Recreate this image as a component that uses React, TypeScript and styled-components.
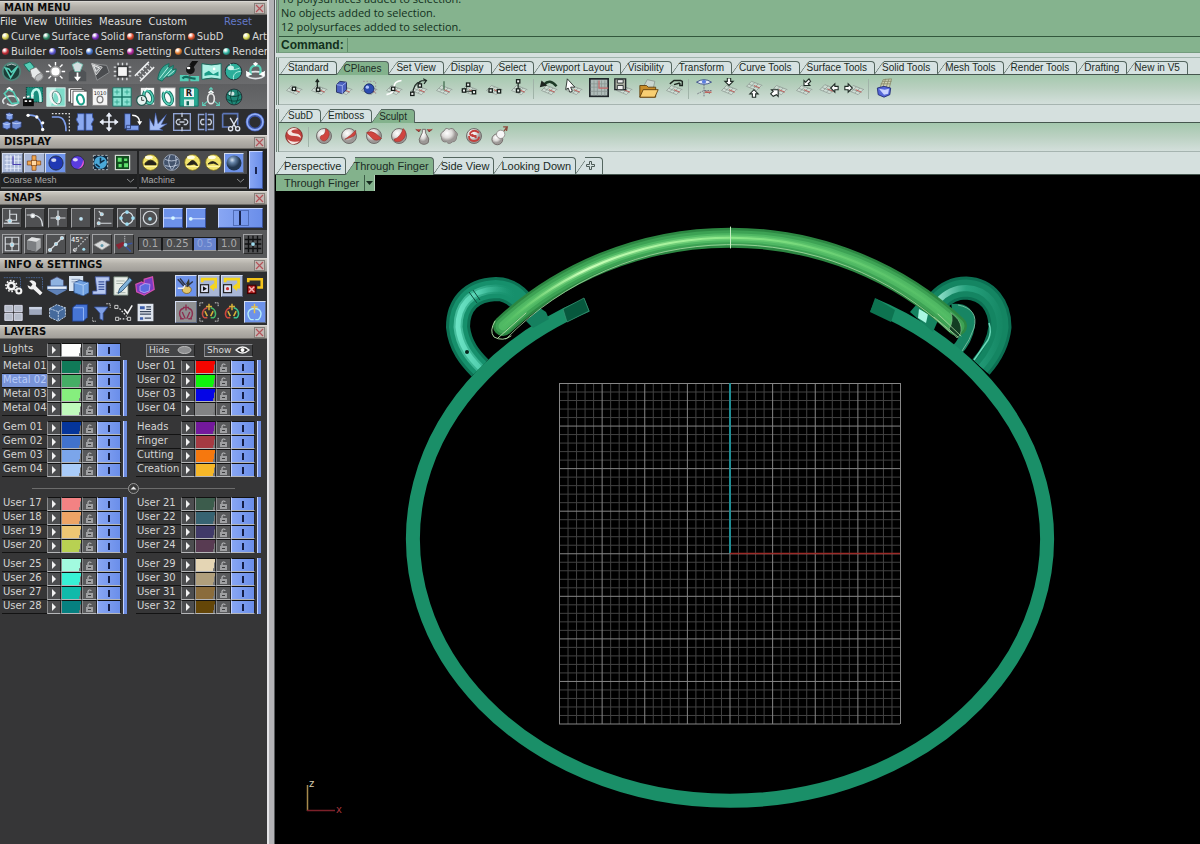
import React from "react";
import styled, { createGlobalStyle, css } from "styled-components";

const SANS = '"DejaVu Sans", Verdana, sans-serif';
const ARIAL = '"Liberation Sans", Arial, sans-serif';
const HUMANIST = '"Open Sans", "Noto Sans", sans-serif';

const GlobalStyle = createGlobalStyle`
  * { box-sizing: border-box; }
  body { margin: 0; background: #000; font-family: ${SANS}; font-size: 10px; }
  button, input, select { font: inherit; color: inherit; margin: 0; padding: 0; border: 0; background: none; border-radius: 0; }
  button, select { cursor: pointer; }
  svg { display: block; }
`;

/* ---------- shell ---------- */

const Shell = styled.div`
  display: grid;
  grid-template-columns: 267px 8px minmax(0, 1fr);
  height: 100vh;
  overflow: hidden;
`;
const Sidebar = styled.aside`
  display: flex;
  flex-direction: column;
  overflow: hidden;
  background: #363637;
  color: #e2e2e2;
  padding-top: 1px;
`;
const Divider = styled.div`
  border-left: 2px solid #e4e4e6;
  border-right: 1px solid #55585a;
  background: #b3b3b6;
`;
const Workspace = styled.main`
  display: flex;
  flex-direction: column;
  min-height: 0;
  background: #d5e0de;
`;

/* ---------- sidebar ---------- */

const Header = styled.header`
  display: flex;
  align-items: center;
  justify-content: space-between;
  height: 14px;
  padding: 0 2px 0 4px;
  background: linear-gradient(#cbc8c1, #b4b1aa 40%, #a19e99);
  border-top: 1px solid #d9d7d2;
  border-bottom: 1px solid #6c6a66;
  h2 { margin: 0; font-size: 10px; line-height: 12px; font-weight: 700; color: #0b0b0b; }
`;
const CloseButton = styled.button`
  width: 11px;
  height: 11px;
  border: 1px solid #85807b;
  background: #c3b9b5;
  svg { width: 9px; height: 9px; }
`;
const MenuRow = styled.nav`
  display: flex;
  align-items: center;
  gap: 7px;
  height: 14px;
  padding-right: 15px;
  background: #2a2b2c;
`;
const MenuButton = styled.button<{ $accent?: boolean }>`
  line-height: 14px;
  color: ${(p) => (p.$accent ? "#6379c8" : "#dedede")};
  margin-left: ${(p) => (p.$accent ? "auto" : "0")};
`;
const CategoryRow = styled.nav<{ $gap: number }>`
  display: flex;
  align-items: center;
  gap: ${(p) => p.$gap}px;
  height: 15px;
  padding-left: 2px;
  background: #2a2b2c;
  overflow: hidden;
  white-space: nowrap;
`;
const Category = styled.button<{ $dot: string; $push?: boolean }>`
  display: flex;
  align-items: center;
  gap: 2px;
  line-height: 14px;
  color: #d6d6d6;
  margin-left: ${(p) => (p.$push ? "auto" : "0")};
  &::before {
    content: "";
    width: 7px;
    height: 7px;
    border-radius: 50%;
    background: radial-gradient(circle at 35% 30%, #fff 0 10%, ${(p) => p.$dot} 50%, #222);
  }
`;
const IconGrid = styled.div<{ $cols: number; $dark?: boolean }>`
  display: grid;
  grid-template-columns: repeat(${(p) => p.$cols}, 1fr);
  align-items: center;
  justify-items: center;
  height: ${(p) => (p.$dark ? 26 : 25)}px;
  background: ${(p) => (p.$dark ? "#2d2e30" : "linear-gradient(#5e5f61, #6a6b6d)")};
`;
const IconButton = styled.button<{ $lit?: "blue" | "pale" | "grey"; $w?: number; $h?: number }>`
  display: flex;
  align-items: center;
  justify-content: center;
  flex: none;
  width: ${(p) => p.$w ?? 22}px;
  height: ${(p) => p.$h ?? 22}px;
  ${(p) => p.$lit && css`
    border: 1px solid;
    border-color: #d3dcf0 #5b6780 #5b6780 #d3dcf0;
    background: ${p.$lit === "blue" ? "#6d92ea" : p.$lit === "pale" ? "#a9b7d6" : "#8f9092"};
  `}
`;
const DisplayBody = styled.div`
  display: grid;
  grid-template-columns: 136px 108px 14px;
  gap: 2px;
  padding: 2px 3px 2px 1px;
  background: #232425;
  height: 42px;
`;
const DisplayGroup = styled.div`
  display: grid;
  grid-template-rows: 23px 14px;
  background: #4b4c4e;
`;
const DisplayIcons = styled.div`
  display: flex;
  align-items: center;
  justify-content: space-between;
  padding: 0 3px 0 1px;
`;
const SelectBox = styled.div`
  position: relative;
  background: #1f2021;
  border-bottom: 1px solid #6d6e70;
  select {
    appearance: none;
    display: block;
    width: 100%;
    height: 13px;
    padding-left: 2px;
    font-family: ${ARIAL};
    font-size: 9px;
    line-height: 13px;
    color: #a9a9a9;
  }
  svg { position: absolute; right: 3px; top: 4px; width: 7px; height: 5px; pointer-events: none; }
`;
const BlueToggle = styled.button<{ $box?: boolean }>`
  display: flex;
  align-items: center;
  justify-content: center;
  border: 1px solid;
  border-color: #c4d3ff #3c549b #3c549b #c4d3ff;
  background: linear-gradient(90deg, #88a6f3, #6a8eea);
  &::after {
    content: "";
    width: ${(p) => (p.$box ? 14 : 2)}px;
    height: ${(p) => (p.$box ? 14 : 7)}px;
    background: ${(p) => (p.$box ? "linear-gradient(90deg, transparent 5px, #1a2550 5px 7px, transparent 7px)" : "#1a2550")};
    border: ${(p) => (p.$box ? "1px solid #506cb8" : "0")};
  }
`;
const SnapRow = styled.div<{ $alt?: boolean }>`
  display: flex;
  align-items: center;
  gap: ${(p) => (p.$alt ? 2 : 3)}px;
  height: ${(p) => (p.$alt ? 28 : 25)}px;
  padding: 0 4px 0 2px;
  background: ${(p) => (p.$alt ? "#58595b" : "#2c2d2e")};
  ${BlueToggle} { width: 45px; height: 20px; margin-left: auto; }
`;
const SnapButton = styled.button<{ $on?: boolean; $apart?: boolean }>`
  display: flex;
  align-items: center;
  justify-content: center;
  flex: none;
  width: 20px;
  height: 20px;
  margin-left: ${(p) => (p.$apart ? 2 : 0)}px;
  border: 1px solid;
  border-color: ${(p) => (p.$on ? "#c4d3ff #38509a #38509a #c4d3ff" : "#a2a3a5 #2a2a2a #2a2a2a #a2a3a5")};
  background: ${(p) => (p.$on ? "#6d92ea" : "#505153")};
`;
const Values = styled.div`
  display: flex;
  flex: 1;
  margin-left: 2px;
`;
const Value = styled.button<{ $on?: boolean }>`
  flex: 1 1 auto;
  height: 14px;
  line-height: 12px;
  border: 1px solid #18191a;
  border-bottom-color: #9c9d9f;
  background: ${(p) => (p.$on ? "#6783cd" : "#4b4c4e")};
  color: ${(p) => (p.$on ? "#93a8de" : "#aaaaac")};
`;
const InfoRow = styled.div<{ $h: number }>`
  display: grid;
  grid-template-columns: repeat(7, 22px) 1fr repeat(4, 23px);
  align-items: center;
  justify-items: center;
  height: ${(p) => p.$h}px;
  padding: 0 1px 0 2px;
  background: #2d2e30;
`;
const Layers = styled.div`
  display: flex;
  flex-direction: column;
  gap: 3px;
  padding-top: 4px;
`;
const LayerColumns = styled.div`
  display: grid;
  grid-template-columns: 134px 1fr;
  row-gap: 5px;
`;
const LayerGroup = styled.div`
  display: grid;
  grid-template-columns: 119px 4px;
  column-gap: 2px;
  padding-left: 2px;
`;
const LayerRows = styled.div`
  display: flex;
  flex-direction: column;
`;
const GroupBar = styled.button`
  border-left: 1px solid #c4d3ff;
  background: #6d8ce0;
`;
const LayerRow = styled.div`
  display: grid;
  grid-template-columns: 45px 14px 21px 15px 24px;
  height: 14px;
`;
const LayerName = styled.span<{ $selected?: boolean }>`
  overflow: hidden;
  white-space: nowrap;
  padding-left: 1px;
  line-height: 12px;
  border-bottom: 1px solid #131313;
  color: #d4d4d4;
  ${(p) => p.$selected && css`background: #7893d8; color: #b9cbf8;`}
`;
const LayerCell = styled.button<{ $bg: string }>`
  display: flex;
  align-items: center;
  justify-content: center;
  border: 1px solid;
  border-color: #111 #222 #b5b6b8 #8a8b8d;
  background: ${(p) => p.$bg};
`;
const Expand = styled(LayerCell)`
  &::after {
    content: "";
    border-left: 4px solid #f2f2f2;
    border-top: 4px solid transparent;
    border-bottom: 4px solid transparent;
  }
`;
const Swatch = styled(LayerCell)`
  background: linear-gradient(100deg, ${(p) => p.$bg} 90%, #77787a 91%);
`;
const Toggle = styled(LayerCell)`
  border-left-color: #c4d3ff;
  background: linear-gradient(90deg, #88a6f3, #6a8eea);
  &::after { content: ""; width: 2px; height: 7px; background: #141d45; }
`;
const LightsRow = styled.div`
  display: flex;
  align-items: center;
  padding-left: 2px;
  height: 14px;
`;
const VisibilityButton = styled.button`
  display: flex;
  align-items: center;
  justify-content: space-between;
  width: 49px;
  height: 13px;
  margin-left: 9px;
  padding: 0 2px;
  border: 1px solid;
  border-color: #85868a #222 #a8a9ab #85868a;
  background: #434446;
  color: #d9d9d9;
  font-size: 9px;
  line-height: 11px;
  &:first-of-type { margin-left: 25px; }
`;
const Spacer = styled.div`
  display: flex;
  align-items: center;
  justify-content: center;
  height: 11px;
  margin: 3px 32px 0;
  background: linear-gradient(transparent 5px, #6c6c6c 5px 6px, transparent 6px);
`;

/* ---------- workspace ---------- */

const grip = css`border-left: 3px double #6f8378; margin-left: 1px;`;

const CommandArea = styled.section`
  ${grip}
  background: #85b38e;
  font-family: ${HUMANIST};
  font-size: 11px;
  color: #12301c;
  border-bottom: 1px solid #739c7d;
`;
const History = styled.div`
  display: flex;
  flex-direction: column;
  justify-content: flex-end;
  height: 36px;
  padding: 0 0 2px 2px;
  overflow: hidden;
  p { margin: 0; flex: none; line-height: 14px; }
`;
const CommandLine = styled.label`
  display: flex;
  align-items: center;
  height: 16px;
  padding-left: 2px;
  border-top: 1px solid #32573c;
  font-family: ${ARIAL};
  font-size: 12px;
  font-weight: 700;
  input {
    flex: 1;
    height: 14px;
    margin-left: 3px;
    border-left: 1px solid #5e8c69;
    outline: 0;
  }
`;
const Band = styled.section<{ $ruled?: boolean }>`
  ${grip}
  margin-top: 4px;
  ${(p) => p.$ruled && css`padding-top: 3px; border-top: 1px solid #9fb3ab;`}
`;
const TabRow = styled.div<{ $big?: boolean }>`
  display: flex;
  align-items: flex-end;
  height: ${(p) => (p.$big ? 18 : 14)}px;
  margin-top: ${(p) => (p.$big ? 5 : 0)}px;
  border-bottom: 1px solid #45564e;
  padding-left: 1px;
  flex: none;
`;
const Tab = styled.button<{ $on?: boolean; $big?: boolean }>`
  position: relative;
  isolation: isolate;
  z-index: ${(p) => (p.$on ? 2 : 1)};
  height: ${(p) => (p.$big ? 17 : 13) + (p.$on ? 1 : 0)}px;
  margin-bottom: ${(p) => (p.$on ? -1 : 0)}px;
  padding: ${(p) => (p.$big ? "0 4px 0 8px" : "0 7px 0 8px")};
  font-family: ${ARIAL};
  font-size: ${(p) => (p.$big ? 11 : 10)}px;
  line-height: ${(p) => (p.$big ? 16 : 13)}px;
  white-space: nowrap;
  color: #1b2b25;
  --fill: ${(p) => (p.$on ? "#83b28c" : "#d6e2e2")};
  > svg { margin: 0 2px; }
  &::before, &::after {
    content: "";
    position: absolute;
    z-index: -1;
    top: 0;
    bottom: 0;
    background: var(--fill);
    border: 0 solid #54665f;
    border-top-width: 1px;
  }
  &::before {
    left: 0;
    width: 12px;
    border-left-width: 1px;
    border-top-left-radius: 3px;
    transform: skewX(-35deg);
    transform-origin: bottom;
  }
  &::after {
    left: 10px;
    right: -1px;
    border-right-width: 1px;
    border-top-right-radius: 4px;
  }
`;
const ToolRow = styled.div<{ $h: number }>`
  display: flex;
  align-items: flex-start;
  height: ${(p) => p.$h}px;
  padding: 2px 0 0 2px;
  background: linear-gradient(#a4c8ad, #b9d0c0 45%, #d3dfdb);
  border-bottom: 1px solid #a6b4b0;
`;
const Rule = styled.span`
  width: 1px;
  height: 20px;
  margin: 2px 2px 0;
  background: #a0b3a8;
`;
const Viewport = styled.section`
  position: relative;
  flex: 1;
  min-height: 0;
  background: #000;
  > svg { width: 100%; height: 100%; }
`;
const ViewLabel = styled.div`
  position: absolute;
  top: 0;
  left: 1px;
  display: flex;
  height: 16px;
  background: #83b28c;
  border-right: 1px solid #b5d3ba;
  font-family: ${ARIAL};
  font-size: 11px;
  line-height: 16px;
  color: #1b2b25;
  span { padding: 0 5px 0 8px; }
  button {
    display: flex;
    align-items: center;
    justify-content: center;
    width: 10px;
    border-left: 1px solid #3b5c46;
  }
`;

/* ---------- icon drawings, 24 x 24 ---------- */

const T = "#56cdb6";
const TD = "#0f6a5c";
const B = "#7d9dea";
const L = "#d5dade";

const ringOn = (
  <g fill="none">
    <ellipse cx="13" cy="13" rx="5" ry="8" stroke={TD} strokeWidth="4" transform="rotate(-20 13 13)" />
    <ellipse cx="13" cy="13" rx="5" ry="8" stroke={T} strokeWidth="2" transform="rotate(-20 13 13)" />
    <path d="M8 6l3-3 4 1" stroke="#fff" strokeWidth="2" />
  </g>
);
const plane = (
  <g>
    <path d="M3 15l6-6 13 5-7 7z" fill="#dfe7e3" fillOpacity=".5" />
    <path d="M3 15l6-6M7 16.500l6-6M11 18l6-6M15 20l6-6M3 15l12 5M6 12.500l12 5M9 9l13 5" stroke="#8b9791" strokeWidth=".9" fill="none" />
    <path d="M12 14l7 3" stroke="#c1605c" strokeWidth="1.200" />
  </g>
);
const node = (x: number, y: number) => <rect key={`${x}-${y}`} x={x - 2} y={y - 2} width="4" height="4" fill="#eef3f0" stroke="#151d19" strokeWidth="1.500" />;
const ball = (fill: string) => (
  <g>
    <circle cx="12" cy="12" r="9.500" fill={fill} stroke="#20252b" />
    <ellipse cx="9" cy="8" rx="3.500" ry="2.500" fill="#fff" opacity=".8" />
  </g>
);
const lens = <circle cx="12" cy="12" r="9" fill="url(#pearl)" stroke="#716f6d" strokeWidth="1.200" />;
const arrow = (d: string) => <path d={d} fill="#fff" stroke="#1f2a25" strokeWidth="1.300" />;
const crown = (a: string, b: string) => (
  <g fill="none" strokeWidth="1.800">
    <path d="M6 19C2 14 5 8 10 7M10 19l-4 0" stroke={a} />
    <path d="M18 19c4-5 1-11-4-12M14 19l4 0" stroke={b} />
    <path d="M12 2v8M8.500 5.500h7M7 11l3 6M17 11l-3 6" stroke="#d9b23a" />
  </g>
);
const yellowLens = (d: string) => (
  <g>
    <circle cx="12" cy="12" r="10" fill="#f1e36b" stroke="#6b5f1c" />
    <ellipse cx="10" cy="5.500" rx="5" ry="2.500" fill="#fffde0" />
    <path d={d} fill="#26231a" stroke="#26231a" />
    <path d="M4 17h16" stroke="#fff6a8" strokeWidth="1.500" />
  </g>
);

const icons: Record<string, React.ReactNode> = {
  logo: <g><circle cx="12" cy="12" r="10" fill="#1c3d38" stroke="#4f857a" strokeWidth="2" /><path d="M5 8l6 11 8-13-7 7-3-4z" fill="#0f2a26" stroke={T} strokeWidth="1.800" /><path d="M7 5q5-3 10 0" stroke={L} fill="none" /></g>,
  torch: <g><path d="M1 4l7-3 5 6-6 5z" fill={T} stroke={TD} /><path d="M8 10l7-3 8 9-7 7-6-5z" fill="#e6e9ea" stroke="#777" /><ellipse cx="18.500" cy="19" rx="5" ry="3.500" fill="#b9bcbe" stroke="#888" transform="rotate(-40 18 19)" /></g>,
  sun: <g stroke="#fff" strokeWidth="1.600"><circle cx="12" cy="12" r="5.500" fill="#fff" stroke="#9c9c9c" /><path d="M12 1v4M12 19v4M1 12h4M19 12h4M4 4l3 3M17 17l3 3M20 4l-3 3M4 20l3-3" /></g>,
  lamp: <g><path d="M2 13q10-9 20 0v10H2z" fill="#505356" /><path d="M6 4l6-3 6 3-3 8H9z" fill="#d5dfe0" stroke="#6fbfae" /><path d="M11 13h2v5h3l-4 5-4-5h3z" fill="#fff" /></g>,
  cone: <g><path d="M2 3l17 2 3 8-14 9z" fill="#4a4c4f" stroke="#909295" /><path d="M2 3l12 4-7 9z" fill="#85888b" stroke="#d8d8d8" /><path d="M4 5l7 3-4 4z" fill="none" stroke="#fff" /></g>,
  chip: <g><path d="M7 2v20M12 2v20M17 2v20M2 7h20M2 12h20M2 17h20" stroke="#d8dadc" strokeWidth="1.600" /><rect x="5" y="5" width="14" height="14" fill="#3a3c3e" /><rect x="7" y="7" width="10" height="10" fill="#f4f4f4" /></g>,
  ruler: <g stroke="#eceeef" strokeWidth="1.800"><path d="M1 17L17 1M7 23L23 7" /><path d="M3 15l6 6M6 12l6 6M9 9l6 6M12 6l6 6M15 3l6 6" strokeWidth="1.200" strokeDasharray="3 2" /></g>,
  leaf: <g><path d="M2 21C3 12 7 5 15 3l-1 5 6-3-1 5 4-1c0 6-5 8-9 9l-3 0-4 5z" fill="#35a491" stroke={TD} /><path d="M4 20L14 7M9 19l9-10M14 17l7-6" stroke="#c9fff1" /></g>,
  brush: <g><path d="M1 16h10v7H1zM13 17h10v6H13z" fill={T} /><path d="M22 0l-6 8-4-4 3-4z" fill="#111" /><circle cx="13" cy="10" r="5" fill="#141414" /><ellipse cx="11" cy="8" rx="2" ry="1.500" fill="#fff" /><path d="M4 20c4-5 8 1 15 0" stroke={TD} strokeWidth="2.500" fill="none" /></g>,
  image: <g><path d="M1 3q11 3 22 0v18q-11-3-22 0z" fill="#aef0e4" stroke={TD} /><path d="M4 14l5-3 5 4 6-3v5q-8-2-16 0z" fill="#1c9d88" /><circle cx="15" cy="9" r="1.500" fill="#fff" /></g>,
  globe: <g>{ball("#2cae9a")}<path d="M5 8c5 2 7 3 14 0M12 21c-1-6 3-9 8-9M11 10l-3-7" stroke="#bff7ec" fill="none" /></g>,
  orbit: <g fill="none"><ellipse cx="12" cy="16" rx="10" ry="4" stroke="#dfe4e6" strokeWidth="2" /><path d="M7 16Q4 6 12 5t5 11" stroke={T} strokeWidth="2.500" /><path d="M9 3l3-2 3 2-3 3zM1 11l1 7 6-3zM23 11l-1 7-6-3z" fill="#fff" /></g>,
  twist: <g fill="none"><path d="M4 20c-5-4 1-8 6-9s13 2 11 7-10 5-14 2" stroke="#dfe4e6" strokeWidth="2" /><path d="M4 8l5-5 6 3 6 13-8 1z" stroke={T} strokeWidth="2" /><path d="M7 3l3-2 4 3" stroke="#fff" strokeWidth="2" /></g>,
  clapper: <g><rect x="4" y="0" width="20" height="18" fill="#1a8d7c" stroke="#0a312c" strokeDasharray="2 1" /><path d="M12 17q-3-12 3-14t6 15" stroke="#bff7ec" strokeWidth="3" fill="none" /><path d="M0 14h13v9H0z" fill="#0c0c0c" /><path d="M0 13l13-3M2 17h3M7 17h3" stroke="#eee" strokeWidth="2" strokeDasharray="3 2" /></g>,
  ringCard: <g><rect x="1" y="1" width="22" height="22" fill="#7fdcca" stroke="#e8f6f3" /><path d="M1 1h11L6 23H1z" fill="#c2f1e8" /><ellipse cx="11" cy="13" rx="5" ry="8" fill="none" stroke="#f6f6f6" strokeWidth="3" transform="rotate(-20 10 13)" /><ellipse cx="13" cy="13" rx="5" ry="8" fill="none" stroke="#557a74" transform="rotate(-20 12 13)" /></g>,
  pages: <g><path d="M0 1h17v17H0z" fill="#fff" stroke="#444" /><path d="M3 3h17v17H3z" fill="#eee" stroke="#444" /><path d="M6 5h17v18H6z" fill="#fff" stroke="#444" /><ellipse cx="15" cy="15" rx="4" ry="6" fill="none" stroke="#1d9f8a" strokeWidth="2.500" transform="rotate(-18 15 15)" /></g>,
  card: <g><rect x="3" y="2" width="18" height="20" fill="#f5f5f5" stroke="#888" /><text x="12" y="9" fontSize="6" textAnchor="middle" fill="#222">1010</text><ellipse cx="12" cy="15" rx="3.500" ry="4" fill="none" stroke="#777" strokeWidth="1.500" /></g>,
  quad: <g fill="#8be2d2" stroke={TD}><path d="M1 1h11v11H1zM12 1h11v11H12zM1 12h11v11H1zM12 12h11v11H12z" /><path d="M6 3v6M3 6h6M18 3v6M15 6h6M6 15v6M3 18h6M18 15v6M15 18h6" stroke="#2ba18d" /></g>,
  clockRing: <g><rect x="7" y="1" width="16" height="20" fill="#f2f2f2" /><g transform="translate(3 -1)">{ringOn}</g><circle cx="8" cy="16" r="6" fill="#e5f3f0" stroke="#23584f" strokeWidth="1.500" /><path d="M8 12v4h3" stroke="#222" fill="none" /></g>,
  ringPage: <g><rect x="4" y="1" width="18" height="22" fill="#fafafa" stroke="#999" />{ringOn}</g>,
  save: <g><path d="M1 1h20l2 2v20H1z" fill="#28a892" stroke={TD} /><rect x="6" y="2" width="12" height="10" fill="#f2f2f2" /><rect x="6" y="15" width="12" height="8" fill="#dcefeb" /><text x="12" y="11" fontSize="10" fontWeight="700" textAnchor="middle" fill="#222">R</text><path d="M9 17h3v5H9z" fill={TD} /></g>,
  axesRing: <g fill="none"><path d="M12 1v6M8 17L2 22M16 17l6 5" stroke="#5fd0bb" strokeWidth="1.300" /><path d="M2 18v4h4M22 18v4h-4M10 3l2-2 2 2" stroke="#5fd0bb" strokeWidth="1.300" /><ellipse cx="12" cy="14" rx="4" ry="6" stroke="#e6e6e6" strokeWidth="2" /><path d="M9 7l3-2 3 2" stroke="#fff" strokeWidth="2" /></g>,
  planet: <g>{ball("#1f8878")}<path d="M4 9q8 5 16 0M4 15q8 4 16 0M9 4q-3 8 1 16M16 4q3 8-2 16" stroke="#073d35" fill="none" /></g>,

  cubes: <g fill={B} stroke="#2b3d75"><path d="M5 2l4-1 4 2v5l-4 2-4-2zM1 13l5-2 4 2v6l-4 2-5-2z" /><path d="M12 12l5-2 6 2v6l-6 3-5-2z" fill="#6f8cd6" /><path d="M5 3l4 1 4-1M1 14l5 1 4-1M12 13l5 1 6-1" stroke="#c9d7fb" fill="none" /></g>,
  arc: <g fill="none"><path d="M2 4q16-2 18 18" stroke={B} strokeWidth="2" /><g fill="#fff"><circle cx="2.500" cy="4" r="2" /><circle cx="13" cy="6" r="2" /><circle cx="20" cy="13" r="2" /><circle cx="20" cy="21" r="2" /></g></g>,
  fillet: <g fill="none"><path d="M1 6h8q9 1 9 17" stroke={B} strokeWidth="2" /><path d="M1 2h21v21" stroke="#e8e8e8" strokeWidth="1.500" strokeDasharray="2 2" /></g>,
  mirror: <g fill="#8ba9f0" stroke="#3551a0"><path d="M11 2v20H3V17q3-2 0-5t0-6V2z" /><path d="M13 2v20h8V17q-3-2 0-5t0-6V2z" /></g>,
  move: <g stroke="#e9eef8" strokeWidth="2" fill="#e9eef8"><path d="M12 4v16M4 12h16" /><path d="M12 1l3 4H9zM12 23l3-4H9zM1 12l4-3v6zM23 12l-4-3v6z" strokeWidth="1" /></g>,
  rotate: <g><path d="M4 16h15v6H4zM2 2h7v18H2z" fill={B} stroke="#2b3d75" /><path d="M11 4q9 0 9 9" stroke="#fff" strokeWidth="1.800" fill="none" /><path d="M17 11h6l-3 5z" fill="#fff" /></g>,
  fan: <path d="M2 22L2 8l5 9L9 1l3 13L22 3l-6 12 7-1-9 6 4 2H2z" fill="#a5bdf5" stroke="#3551a0" strokeWidth=".7" />,
  chain: <g fill="none" stroke="#c7cedb" strokeWidth="1.600"><rect x="2" y="2" width="20" height="20" stroke="#8fa3d4" /><path d="M12 1v5M12 18v5" /><path d="M10 15H7q-4-3 0-6h3M14 9h3q4 3 0 6h-3M9 12h6" /></g>,
  unchain: <g fill="none" stroke="#c7cedb" strokeWidth="1.600"><path d="M10 3H3v18h7M14 3h7v18h-7" stroke="#8fa3d4" /><path d="M12 1v22" stroke={B} /><path d="M10 9H7q-3 3 0 6h3M14 9h3q3 3 0 6h-3" /></g>,
  cut: <g fill="none" stroke="#dde2ec" strokeWidth="1.600"><path d="M2 2h18v14M2 2v16h8" stroke="#5c76b8" strokeWidth="2" /><path d="M11 7l7 12M20 7l-7 12" /><circle cx="11.500" cy="20" r="2.500" /><circle cx="20" cy="20" r="2.500" /></g>,
  torus: <g fill="none"><circle cx="12" cy="12" r="9" stroke="#3c57ae" strokeWidth="4.500" /><circle cx="12" cy="12" r="9.500" stroke="#93aef5" strokeWidth="2" /></g>,

  gridLit: <g stroke="#eef3ff" fill="none"><path d="M1 4h22M1 9h22M1 14h22M1 19h22M4 1v22M9 1v22M14 1v22M19 1v22" /><path d="M12 3v11h11" stroke="#4a3fb0" strokeWidth="1.600" /></g>,
  gumball: <g fill="#f0a750" stroke="#7b3f10"><path d="M9 1h6v7h-6zM9 15h6v8h-6zM2 9h7v6H2zM15 9h7v6h-7z" /><rect x="8" y="8" width="8" height="8" fill="#ffd9a3" /></g>,
  ballBlue: ball("#2038b4"),
  ballPink: <g>{ball("#5a3ce0")}<path d="M20 8a9 9 0 0 1-8 13q7-3 8-13z" fill="#ef5bd0" /></g>,
  clock: <g><rect x="3" y="3" width="18" height="18" fill="#10263a" stroke="#cfd8dc" strokeDasharray="3 2" /><circle cx="12" cy="12" r="8" fill="#4aa8d8" /><path d="M12 6v6l5-3M6 14l5 4" stroke="#0c2b45" strokeWidth="2" fill="none" /></g>,
  greenBox: <g><rect x="3" y="3" width="18" height="18" fill="#114d1e" stroke="#d6dcd6" strokeWidth="1.500" /><path d="M6 6h5v5H6zM14 13h5v5h-5zM7 14h4v4H7zM14 7h4v3h-4z" fill="#5fe06c" /></g>,
  yellow1: yellowLens("M5 15h14v-2q-7-8-14 0z"),
  yellow2: yellowLens("M5 15l4-4q4-4 8 2l2 4-5-3-5 1z"),
  yellow3: yellowLens("M5 14q6-7 13 1l-6-2z"),
  wire: <g><circle cx="12" cy="12" r="10" fill="#43536c" stroke="#aab6c8" /><path d="M4 8q8 4 16 0M4 16q8 3 16-1M10 3q-4 9 2 18M17 4q3 8-4 17" stroke="#cdd8ea" fill="none" /></g>,
  pearlBlue: <circle cx="12" cy="12" r="10" fill="url(#steel)" />,

  end: <g stroke={L} fill="none" strokeWidth="1.600"><path d="M9 1v18M9 7h9v8H3" /><circle cx="9" cy="16" r="2.500" fill="#9fdcf0" /><path d="M1 19h21" /></g>,
  near: <g stroke={L} fill="none" strokeWidth="1.600"><path d="M1 8h7q14 0 14 15" /><circle cx="9" cy="9" r="2.500" fill="#fff" /></g>,
  point: <g><circle cx="12" cy="13" r="2.500" fill="#bfe3f2" /></g>,
  cross: <g stroke={L} fill="none" strokeWidth="1.600"><path d="M12 2v20M2 12h20" /><circle cx="12" cy="12" r="2.500" fill="#bfe3f2" /></g>,
  perp: <g stroke={L} fill="none" strokeWidth="1.500"><path d="M5 3l4 4M5 12l2 2M8 19h14" /><circle cx="9" cy="7" r="2" fill="#9fdcf0" /><circle cx="5" cy="19" r="2" fill="#9fdcf0" /></g>,
  quadSnap: <g fill="none"><circle cx="12" cy="12" r="8" stroke={L} strokeWidth="1.600" /><g fill="#9fdcf0"><circle cx="12" cy="4" r="2.500" /><circle cx="12" cy="20" r="2.500" /><circle cx="4" cy="12" r="2.500" /><circle cx="20" cy="12" r="2.500" /></g></g>,
  center: <g fill="none"><circle cx="12" cy="12" r="9" stroke={L} strokeWidth="1.600" /><circle cx="12" cy="13" r="2.500" fill="#9fdcf0" /></g>,
  mid: <g><path d="M0 12h24" stroke="#cbd9ff" strokeWidth="1.500" /><circle cx="12" cy="12" r="2.500" fill="#d5f7ff" /></g>,
  endLine: <g><path d="M4 13h20" stroke="#cbd9ff" strokeWidth="1.500" /><circle cx="5" cy="13" r="2.500" fill="#d5f7ff" /></g>,
  gridBox: <g fill="none" stroke={L} strokeWidth="1.500"><path d="M3 3h18v18H3zM3 12h18M12 3v18" /><circle cx="12" cy="13" r="2.500" fill="#9fdcf0" /></g>,
  box3d: <g><path d="M3 7l6-4 12 2v12l-6 5-12-3z" fill="#a8abad" /><path d="M3 7l12 2v13l-12-3z" fill="#7c7f82" /><path d="M3 7l6-4 12 2-6 4z" fill="#e0e2e3" /></g>,
  line: <g stroke={L} strokeWidth="1.600"><path d="M4 20L20 4" /><circle cx="4" cy="20" r="2" fill="#9fdcf0" /><circle cx="12" cy="12" r="2" fill="#9fdcf0" /><circle cx="20" cy="4" r="2" fill="#9fdcf0" /></g>,
  angle: <g><path d="M4 21L22 3" stroke={L} strokeDasharray="2 2" strokeWidth="1.500" /><text x="0" y="9" fontSize="9" fill="#fff">45°</text><circle cx="5" cy="20" r="2" fill="none" stroke="#fff" /><circle cx="17" cy="19" r="2" fill="#9fdcf0" /></g>,
  planar: <g><path d="M1 13l11-6 11 6-11 7z" fill="#d9dbdc" stroke="#888" /><circle cx="12" cy="14" r="2" fill="#5f98ac" /></g>,
  smart: <g><path d="M13 1v11" stroke={L} strokeDasharray="2 1" /><path d="M1 13l10-4 2 4-8 6z" fill="#8a2434" /><path d="M13 13l10-2M13 14l8 8" stroke="#3b539e" strokeWidth="2" /><circle cx="14" cy="13" r="2.500" fill="#9fdcf0" /></g>,
  gridSnap: <g stroke="#0f1011" strokeWidth="1.800"><path d="M6 1v22M12 1v22M18 1v22M1 6h22M1 12h22M1 18h22" /><circle cx="12" cy="12" r="2.500" fill="#9fdcf0" stroke="none" /></g>,

  gears: <g fill="none" stroke="#f3f3f3"><path d="M1 2h20v12" stroke="#4a6a9e" strokeDasharray="2 1" /><circle cx="10" cy="12" r="4" strokeWidth="3" /><circle cx="10" cy="12" r="6.500" strokeWidth="2" strokeDasharray="2 2" /><circle cx="19" cy="18" r="3" strokeWidth="2.500" /></g>,
  wrench: <g><path d="M1 2h20v14" fill="none" stroke="#4a6a9e" strokeDasharray="2 1" /><path d="M5 6l4 4-2 3-4-2q1 6 7 5l8 7 3-3-8-8q2-6-5-7z" fill="#f1f1f1" /></g>,
  stack: <g><path d="M1 17l11-4 11 4-11 6z" fill="#5f82b8" /><path d="M4 5l8-4 8 4v7l-8 3-8-3z" fill="#8fb2e0" stroke="#446" /><rect x="0" y="12" width="24" height="4" fill="#e4edf8" stroke="#3a5c94" /></g>,
  cubeDoc: <g><path d="M0 0h17v18H0z" fill="#d8e4f2" /><path d="M3 4h10M3 7h10" stroke="#7f93b4" /><path d="M6 8l7-3 11 3v12l-7 4-11-4z" fill="#6fa0e0" stroke="#26477c" /><path d="M6 8l11 3v12M17 11l6-3" stroke="#b8d4f8" fill="none" /></g>,
  scroll: <g><path d="M5 1h17v5h-4v16H2v-4h5z" fill="#b7c8f0" stroke="#3e56a0" /><path d="M9 7h7M9 10h7M9 13h7M9 16h7" stroke="#3e56a0" strokeWidth="1.500" /></g>,
  note: <g><path d="M1 1h17v22H1z" fill="#e9eee8" stroke="#6d7f74" /><path d="M4 6h10M4 9h8M4 20h11" stroke="#9aa79f" /><path d="M23 5L11 18l-5 3 2-6L20 2z" fill="#7fb2da" stroke="#24476a" /></g>,
  purple: <g><path d="M1 10l7-3 3 2V4l10-3 2 15-12 7-9-4z" fill="#7a3cc4" stroke="#d24fb0" strokeWidth="1.500" /><path d="M6 12l6-3 6 1-1 8-6 2-5-2z" fill="#5b6be0" stroke="#c6a6f2" /></g>,
  windows: <g fill="#b6bdca" stroke="#eef"><path d="M1 3h10v8H1zM13 3h10v8H13zM1 13h10v9H1zM13 13h10v9H13z" /></g>,
  screen: <g><path d="M4 5h16v10H4z" fill="#9fa8bd" /><path d="M4 5h16v3H4z" fill="#c9d1e2" /></g>,
  wireCube: <g fill="#456a9c" stroke="#d8e6f6" strokeDasharray="3 1"><path d="M2 7l9-5 11 4v11l-9 6-11-5z" /><path d="M2 7l11 4 9-5M13 11v12" fill="none" /></g>,
  book: <g><path d="M3 6l5-4h14v16l-5 5H3z" fill="#4675d6" stroke="#1d3880" /><path d="M5 6h12v16" stroke="#a8c6ff" fill="none" /></g>,
  filter: <g><path d="M3 5h17l-6 8v9l-4-2v-7z" fill="#7f9fe4" stroke="#3552a0" /><path d="M18 1h5v5M0 18v5h5" stroke="#fff" fill="none" strokeDasharray="2 1" /></g>,
  check: <g fill="none" stroke="#f1f1f1" strokeWidth="1.500"><path d="M13 8l4 5 6-10" strokeWidth="2" /><path d="M1 3h4v4H1zM2 18h4v4H2zM17 18h4v4h-4z" strokeWidth="1" /><path d="M7 7l9 10M7 20h9" strokeDasharray="2 2" /></g>,
  form: <g><path d="M2 1h20v22H2z" fill="#dfe5ee" /><path d="M5 4h6v4H5zM5 18h4v3H5z" fill="#3d5fae" /><path d="M13 5h6M13 8h6M5 11h14M5 14h14M11 19h8" stroke="#3c4a60" strokeWidth="1.500" /></g>,
  jug: <g><path d="M9 3l3 6 4-7 1 8-3 2" fill="#3a3a2a" /><ellipse cx="13" cy="17" rx="6" ry="5" fill="#e3c66a" stroke="#7b5a18" /><path d="M1 3l9 10M4 2l8 10M21 6l-8 7" stroke="#2f3548" strokeWidth="2" /><path d="M1 15h7l3-4" stroke="#e9ecf5" strokeWidth="2" fill="none" /></g>,
  recPlay: <g fill="none"><path d="M4 8V4h17v10h-6" stroke="#f5d51c" strokeWidth="3.500" /><path d="M19 9l-6 5 6 5z" fill="#f5d51c" /><rect x="2" y="11" width="10" height="10" fill="#dfe3f5" stroke="#222" strokeWidth="1.500" /><path d="M5 13l5 3-5 3z" fill="#111" /></g>,
  recDot: <g fill="none"><path d="M4 8V4h17v10h-6" stroke="#f5d51c" strokeWidth="3.500" /><path d="M19 9l-6 5 6 5z" fill="#f5d51c" /><rect x="2" y="11" width="10" height="10" fill="#dfe3f5" stroke="#222" strokeWidth="1.500" /><circle cx="7" cy="16" r="2" fill="#c33" /></g>,
  recStop: <g fill="none"><path d="M3 7V3h18v11h-6" stroke="#f5c41c" strokeWidth="3.500" /><rect x="2" y="11" width="11" height="11" fill="#b02020" stroke="#400" strokeWidth="1.500" /><path d="M4 13l7 7M11 13l-7 7" stroke="#f4b0b0" strokeWidth="2" /></g>,
  crownRed: <g stroke="#8c2f50" fill="none" strokeWidth="1.800"><path d="M6 21C1 14 4 8 9 7M18 21c5-7 2-13-3-14M12 2v8M8 6h8M7 12l4 9M17 12l-4 9M4 21h5M15 21h5" /></g>,
  crownMix: <g><path d="M1 5V1h4M19 1h4v4M1 19v4h4M23 19v4h-4" stroke="#eee" strokeDasharray="2 1" fill="none" />{crown("#c94e44", "#48b86a")}</g>,
  crownGreen: crown("#d0473c", "#3cc490"),
  crownBlue: <g><path d="M7 21C1 14 4 7 12 7s11 7 5 14M7 21h4M13 21h4" stroke="#b4ecf8" fill="none" strokeWidth="1.800" /><path d="M12 1v12M8 5h8" stroke="#e8c34c" strokeWidth="1.800" /></g>,

  cpOrigin: <g>{plane}{node(12, 13)}</g>,
  cpElev: <g>{plane}<path d="M10 14V2M8 5l2-3 2 3" stroke="#1a241f" fill="none" strokeWidth="1.500" />{node(11, 14)}</g>,
  cpBox: <g>{plane}<path d="M3 8l4-4 8 1v9l-5 5-7-2z" fill="#4b61c0" stroke="#1c2659" /><path d="M3 8l7 1 5-4M10 9v10" stroke="#aab9f2" fill="none" /></g>,
  cpBall: <g>{plane}<path d="M5 4h15v15" fill="none" stroke="#9a8a92" strokeDasharray="2 2" /><circle cx="12" cy="13" r="6" fill="#2c4db0" stroke="#14245c" /><circle cx="10" cy="11" r="2" fill="#b3c8ff" /></g>,
  cpCurve: <g>{plane}<path d="M3 20Q12 18 12 11T21 3" stroke="#fff" strokeWidth="2" fill="none" />{node(11, 13)}</g>,
  cpPerp: <g>{plane}<path d="M4 19Q7 4 14 5M13 9Q9 3 20 3M17 1l4 2-3 4" stroke="#1f2a25" strokeWidth="1.400" fill="none" />{node(4, 19)}{node(13, 9)}</g>,
  cpLines: <g>{plane}<path d="M12 14V4" stroke="#3f6a4c" strokeWidth="1.500" /></g>,
  cp3: <g>{plane}<path d="M7 16h11M7 16l4-8" stroke="#1f2a25" />{node(6, 15)}{node(18, 17)}{node(11, 8)}</g>,
  cp2: <g>{plane}{node(8, 15)}{node(18, 16)}</g>,
  cpVert: <g>{plane}<path d="M11 14V4" stroke="#1f2a25" strokeWidth="1.500" />{node(11, 15)}{node(11, 4)}</g>,
  cpUndo: <g>{plane}<path d="M21 10Q13 0 6 8" stroke="#1d3a26" strokeWidth="3" fill="none" /><path d="M1 11l2-8 7 6z" fill="#1d241f" /></g>,
  cpPick: <g>{plane}<path d="M4 1l9 10h-5l2 5-3 1-2-5-3 2z" fill="#fff" stroke="#161d19" /></g>,
  cpGrid: <g><rect x="1" y="1" width="22" height="21" fill="#aebbb8" stroke="#20262a" strokeWidth="2" /><path d="M6 3v18M10 3v18M15 3v18M19 3v18M2 7h20M2 11h20M2 16h20" stroke="#8b9894" /><path d="M12 3v9h11" stroke="#c66a6a" fill="none" strokeWidth="1.500" /></g>,
  cpSave: <g>{plane}<path d="M1 1h13v13H1z" fill="#a9ada0" stroke="#20262a" strokeWidth="1.600" /><path d="M4 2h7v4H4zM4 9h7v5H4z" fill="#f0f0f0" stroke="#20262a" /></g>,
  cpOpen: <g><path d="M5 11l5-9 9 2-2 9z" fill="#c9d6cf" stroke="#8a968f" /><path d="M1 9h8l2 2h9v12H1z" fill="#c98d28" stroke="#5a3a08" /><path d="M5 14h18l-4 9H1z" fill="#f8cf72" stroke="#5a3a08" /></g>,
  cpHand: <g>{plane}<path d="M7 7l5-4h8l2 1v5h-3V6M12 8l7-2" stroke="#1d241f" strokeWidth="1.700" fill="none" /></g>,
  cpEye: <g><path d="M12 8v14M4 19l8-4 8 4M13 15h8" stroke="#667" fill="none" strokeDasharray="2 1" /><path d="M13 17h8" stroke="#c24d48" strokeWidth="1.500" /><path d="M3 5q9-6 18 0-9 5-18 0z" fill="#e8eefa" stroke="#2c3f80" /><circle cx="12" cy="4.500" r="2.500" fill="#5c7fe0" /></g>,
  cpTop: <g>{plane}{arrow("M10 0h4v4h3l-5 5-5-5h3z")}</g>,
  cpBottom: <g><g transform="translate(0 -5)">{plane}</g>{arrow("M10 23h4v-4h3l-5-5-5 5h3z")}</g>,
  cpFront: <g>{plane}{arrow("M2 19l3-3-2-2h8v8l-2-2-4 2z")}</g>,
  cpBack: <g>{plane}{arrow("M20 4l-3 3 2 2h-7V3l2 2 4-4z")}</g>,
  cpRight: <g><g transform="translate(-2 -1)">{plane}</g>{arrow("M23 10v4h-4v3l-5-5 5-5v3z")}</g>,
  cpLeft: <g><g transform="translate(2 0)">{plane}</g>{arrow("M1 10v4h4v3l5-5-5-5v3z")}</g>,
  cpNamed: <g><path d="M7 12l4-10 10-1-3 12M10 13l4-12M14 13l4-12M8 7h12M10 4h11" fill="#cfd2b4" stroke="#8a8a6a" /><path d="M4 12l8-2 8 2-1 8-7 3-7-3z" fill="#5566d8" stroke="#1e2870" /><path d="M6 13l7 1 5-1-1 6-5 1z" fill="#c9d2ff" /></g>,

  sc0: <g><circle cx="12" cy="12" r="10" fill="#c2403c" stroke="#7a2a28" /><path d="M4 7q5-7 13-3-9 0-8 3 1 2 5 2 7 1 6 6-1-3-7-3-9 0-9-5zM4 15q3 4 9 4 5 0 6-1-6 6-11 3-3-2-4-6z" fill="#f4e4e0" /></g>,
  sc1: <g>{lens}<path d="M14 3q7 4 3 11t-9 2q-2-4 2-5t4-8z" fill="#d0453f" stroke="#8d2a27" strokeWidth=".6" /></g>,
  sc2: <g>{lens}<path d="M20 5q1 6-4 8t-9 3q6-4 8-6t5-5z" fill="#d0453f" stroke="#8d2a27" strokeWidth=".6" /></g>,
  sc3: <g>{lens}<path d="M3 8q6-3 11 1t7 6q-7 4-11 0T3 8z" fill="#d0453f" stroke="#8d2a27" strokeWidth=".6" /></g>,
  sc4: <g>{lens}<path d="M17 3q5 4 2 10t-9 6q-4 0-4-3 4-1 7-5t4-8z" fill="#d0453f" stroke="#8d2a27" strokeWidth=".6" /></g>,
  sc5: <g><path d="M10 4h4q-1 5 2 8t1 8q-5 4-10 0-2-4 1-8t2-8z" fill="url(#pearl)" stroke="#76706e" strokeWidth="1.200" /><path d="M2 4l4 3 2-3M22 4l-4 3-2-3" fill="#b9443f" stroke="#7a2a28" /></g>,
  sc6: <path d="M6 6q2-5 6-2 5-3 7 2 5 3 2 7 0 6-5 6-4 4-7 0-6 1-6-5-3-5 3-8z" fill="url(#pearl)" stroke="#84807e" strokeWidth="1.200" />,
  sc7: <g>{lens}<path d="M18 8q-5-4-9-1t1 5h5M6 12q0 6 6 6t6-5M9 10l6 4" stroke="#c2403c" strokeWidth="2.200" fill="none" /></g>,
  sc8: <g><circle cx="10" cy="16" r="6.500" fill="url(#pearl)" stroke="#76706e" strokeWidth="1.200" /><circle cx="14" cy="10" r="5" fill="#f7f7f7" stroke="#8a8684" /><path d="M18 6l3-4M17 1l5 0-1 5" stroke="#8d4a3c" strokeWidth="1.500" fill="none" /></g>,
};

const Glyph = ({ name, size = 22 }: { name: string; size?: number }) => (
  <svg width={size} height={size} viewBox="0 0 24 24" aria-hidden="true">{icons[name]}</svg>
);

/* ---------- data ---------- */

type Layer = [string, string];
const groups: Layer[][] = [
  [["Metal 01", "#107a58"], ["Metal 02", "#45ad65"], ["Metal 03", "#86ee7e"], ["Metal 04", "#bff9bb"]],
  [["User 01", "#f50500"], ["User 02", "#10f30c"], ["User 03", "#0505e6"], ["User 04", "#828384"]],
  [["Gem 01", "#05359a"], ["Gem 02", "#4172cc"], ["Gem 03", "#7ba5ea"], ["Gem 04", "#a9cbf8"]],
  [["Heads", "#73199c"], ["Finger", "#a53a42"], ["Cutting", "#f6780e"], ["Creation", "#f6b728"]],
];
const userGroups: Layer[][] = [
  [["User 17", "#f38283"], ["User 18", "#eea466"], ["User 19", "#edc674"], ["User 20", "#b8d152"]],
  [["User 21", "#3c5c4c"], ["User 22", "#376372"], ["User 23", "#403a68"], ["User 24", "#583b52"]],
  [["User 25", "#a2fadf"], ["User 26", "#38f1d5"], ["User 27", "#10baaa"], ["User 28", "#068080"]],
  [["User 29", "#e4d5b4"], ["User 30", "#b09f7c"], ["User 31", "#8a6c3c"], ["User 32", "#644608"]],
];
const row1 = ["logo", "torch", "sun", "lamp", "cone", "chip", "ruler", "leaf", "brush", "image", "globe", "orbit"];
const row2 = ["twist", "clapper", "ringCard", "pages", "card", "quad", "clockRing", "ringPage", "save", "axesRing", "planet"];
const row3 = ["cubes", "arc", "fillet", "mirror", "move", "rotate", "fan", "chain", "unchain", "cut", "torus"];
const toolTabs = ["Standard", "CPlanes", "Set View", "Display", "Select", "Viewport Layout", "Visibility", "Transform", "Curve Tools", "Surface Tools", "Solid Tools", "Mesh Tools", "Render Tools", "Drafting", "New in V5"];
const cplaneTools = [
  ["cpOrigin", "cpElev", "cpBox", "cpBall", "cpCurve", "cpPerp", "cpLines", "cp3", "cp2", "cpVert"],
  ["cpUndo", "cpPick", "cpGrid", "cpSave", "cpOpen", "cpHand"],
  ["cpEye", "cpTop", "cpBottom", "cpFront", "cpBack", "cpRight", "cpLeft"],
  ["cpNamed"],
];
const sculptTools = [["sc0"], ["sc1", "sc2", "sc3", "sc4", "sc5", "sc6", "sc7", "sc8"]];

/* ---------- pieces ---------- */

const PanelHeader = ({ title }: { title: string }) => (
  <Header>
    <h2>{title}</h2>
    <CloseButton aria-label={`Close ${title}`}>
      <svg viewBox="0 0 9 9"><path d="M1 1l7 7M8 1L1 8" stroke="#b4535a" strokeWidth="1.200" /></svg>
    </CloseButton>
  </Header>
);

const Lock = () => (
  <svg width="9" height="9" viewBox="0 0 9 9" fill="none" aria-hidden="true">
    <rect x="1" y="4" width="7" height="5" fill="#9fa0a2" />
    <path d="M3 4V2q0-1 1.500-1T6.500 2" stroke="#c7c8ca" />
    <path d="M3 6.500h3" stroke="#3c3d3f" />
  </svg>
);

const LayerItem = ({ name, color, selected }: { name: string; color: string; selected?: boolean }) => (
  <LayerRow>
    <LayerName $selected={selected}>{name}</LayerName>
    <Expand $bg="#4c4d4f" aria-label={`Select ${name}`} />
    <Swatch $bg={color} aria-label={`Colour of ${name}`} />
    <LayerCell $bg="#58595b" aria-label={`Lock ${name}`}><Lock /></LayerCell>
    <Toggle $bg="#7e9bea" aria-label={`Show ${name}`} />
  </LayerRow>
);

const LayerBlock = ({ sets }: { sets: Layer[][] }) => (
  <LayerColumns>
    {sets.map((set) => (
      <LayerGroup key={set[0][0]}>
        <LayerRows>
          {set.map(([name, color]) => <LayerItem key={name} name={name} color={color} selected={name === "Metal 02"} />)}
        </LayerRows>
        <GroupBar aria-label={`Toggle group ${set[0][0]}`} />
      </LayerGroup>
    ))}
  </LayerColumns>
);

const Chevron = () => <svg viewBox="0 0 7 5"><path d="M0 1l3.500 3L7 1" fill="none" stroke="#8b8c8e" /></svg>;

const TabStrip = ({ tabs, active }: { tabs: string[]; active: string }) => (
  <TabRow>
    {tabs.map((t) => <Tab key={t} $on={t === active}>{t}</Tab>)}
  </TabRow>
);

const Tools = ({ sets, height }: { sets: string[][]; height: number }) => (
  <ToolRow $h={height}>
    {sets.map((set, i) => (
      <React.Fragment key={set[0]}>
        {i > 0 && <Rule />}
        {set.map((n) => <IconButton key={n} $w={25} aria-label={n}><Glyph name={n} size={20} /></IconButton>)}
      </React.Fragment>
    ))}
  </ToolRow>
);

const minor = Array.from({ length: 41 }, (_, i) => i).filter((i) => i % 5 !== 0);
const major = [0, 1, 2, 3, 4, 5, 6, 7, 8];
const arch = "M503 326A329 320 0 0 1 957 326";
const hookL = "M521 301Q510 289 496 289C470 290 458 306 458 327C460 346 470 358 480 368";
const hookR = "M938 301Q950 288 966 288C988 289 1000 306 1000 327C998 346 989 358 981 367";

const Model = () => (
  <svg viewBox="275 175 925 669" role="img" aria-label="Ring model, through finger view">
    <defs>
      <linearGradient id="shine" gradientUnits="userSpaceOnUse" x1="500" y1="0" x2="960" y2="0">
        <stop offset="0" stopColor="#6fe06a" stopOpacity="0" />
        <stop offset=".18" stopColor="#c9ffb8" />
        <stop offset=".5" stopColor="#8de989" />
        <stop offset="1" stopColor="#58c568" stopOpacity=".2" />
      </linearGradient>
      <linearGradient id="hookShineL" gradientUnits="userSpaceOnUse" x1="455" y1="0" x2="515" y2="0">
        <stop offset="0" stopColor="#7ff5d8" />
        <stop offset=".4" stopColor="#5fdcbc" />
        <stop offset="1" stopColor="#1b9a76" stopOpacity="0" />
      </linearGradient>
      <linearGradient id="hookShineR" gradientUnits="userSpaceOnUse" x1="940" y1="0" x2="1005" y2="0">
        <stop offset="0" stopColor="#b9ffee" />
        <stop offset=".4" stopColor="#2fae8a" />
        <stop offset="1" stopColor="#148562" />
      </linearGradient>
    </defs>

    <g fill="none">
      <g stroke="#424242">
        {minor.map((i) => <path key={i} d={`M${559.5 + i * 8.525} 383V724M559 ${383.5 + i * 8.5125}H900`} />)}
      </g>
      <g stroke="#868686">
        {major.map((i) => <path key={i} d={`M${559.5 + i * 42.625} 383V724M559 ${383.5 + i * 42.5625}H900`} />)}
      </g>
      <path d="M730 383V553" stroke="#1f8d94" strokeWidth="2" />
      <path d="M730 553.500H900" stroke="#9c2a27" strokeWidth="1.500" />
    </g>

    <g fill="none" strokeLinejoin="round">
      <path d={hookL} stroke="#0d7355" strokeWidth="24" />
      <path d={hookL} stroke="#16906c" strokeWidth="18" />
      <path d={hookL} stroke="url(#hookShineL)" strokeWidth="9" opacity=".45" />
      <path d={hookL} stroke="url(#hookShineL)" strokeWidth="5" opacity=".7" />
      <path d="M469 292l8 11M473 290l7 10" stroke="#0c4e3c" />
      <circle cx="467" cy="352" r="2" fill="#06251c" />
      <path d={hookR} stroke="#0c7053" strokeWidth="23" />
      <path d={hookR} stroke="#148562" strokeWidth="17" />
      <path d={hookR} stroke="url(#hookShineR)" strokeWidth="6" opacity=".7" />
      <path d="M974 360L988 340Q992 332 989 323" stroke="#6ad9ba" strokeWidth="1.500" />
      <path d="M952 310Q970 308 969 325Q967 340 956 351" stroke="#178563" strokeWidth="12" />
      <path d="M958 305Q979 309 974 328Q970 340 962 351" stroke="#6fb799" />
    </g>

    <path d="M587 305A317 262 0 1 0 873 305" fill="none" stroke="#1a8f68" strokeWidth="14" />
    <path d="M563 309L584 298L589 311L567 322Z" fill="#07583d" stroke="#3c9475" strokeWidth=".7" />
    <path d="M895 310L875 298L870 312L891 322Z" fill="#0d7350" />
    <path d="M526 321l14-13 6 4 3 7-16 9z" fill="#15805f" />
    <path d="M910 312l6-7 23 13-6 14z" fill="#158360" />
    <path d="M919 309l9 5-2 9-8-5z" fill="#a9f7e2" />

    <g fill="none" strokeLinecap="round">
      <path d={arch} stroke="#2c8742" strokeWidth="20" />
      <path d={arch} stroke="#3da254" strokeWidth="15" />
      <path d={arch} stroke="#4fb863" strokeWidth="9" />
      <path d={arch} stroke="url(#shine)" strokeWidth="5" opacity=".4" />
      <path d={arch} stroke="url(#shine)" strokeWidth="2" />
      <path d="M506 339A312 306 0 0 1 950 332" stroke="#a9dba4" strokeWidth=".8" />
      <path d="M495 321Q489 331 494 337Q503 342 511 336M498 338L526 313" stroke="#a9d6a0" />
      <path d="M951 313q9 6 10 14t-4 11l-8-9q5-8 2-16z" fill="#123d22" stroke="#75b680" strokeWidth=".8" />
      <path d="M934 317L958 337M938 314L961 336" stroke="#a9d6a0" strokeWidth=".8" />
      <path d="M730.500 227V248" stroke="#c5eec2" strokeWidth="1" />
    </g>

    <path d="M307.500 785V811" stroke="#a68a4c" strokeWidth="1.500" />
    <path d="M307 810.500H335" stroke="#7c2029" strokeWidth="1.500" />
    <text x="309" y="787" fontFamily={SANS} fontSize="10" fill="#d8ccb0">z</text>
    <text x="336" y="813" fontFamily={SANS} fontSize="10" fill="#a3343a">x</text>
  </svg>
);

export default function App() {
  return (
    <Shell>
      <GlobalStyle />
      <Sidebar>
        <PanelHeader title="MAIN MENU" />
        <MenuRow>
          {["File", "View", "Utilities", "Measure", "Custom"].map((m) => <MenuButton key={m}>{m}</MenuButton>)}
          <MenuButton $accent>Reset</MenuButton>
        </MenuRow>
        <CategoryRow $gap={2}>
          <Category $dot="#d6cf52">Curve</Category>
          <Category $dot="#2f8a68">Surface</Category>
          <Category $dot="#7a2cc0">Solid</Category>
          <Category $dot="#e0492c">Transform</Category>
          <Category $dot="#e0532c">SubD</Category>
          <Category $dot="#d6d852" $push>Art</Category>
        </CategoryRow>
        <CategoryRow $gap={3}>
          <Category $dot="#c22a34">Builder</Category>
          <Category $dot="#5a55d0">Tools</Category>
          <Category $dot="#4a78d0">Gems</Category>
          <Category $dot="#b0289c">Setting</Category>
          <Category $dot="#e07a2c">Cutters</Category>
          <Category $dot="#2fb0a0">Render</Category>
        </CategoryRow>
        <IconGrid $cols={12}>{row1.map((n) => <IconButton key={n} aria-label={n}><Glyph name={n} size={21} /></IconButton>)}</IconGrid>
        <IconGrid $cols={12}>{row2.map((n) => <IconButton key={n} aria-label={n}><Glyph name={n} size={20} /></IconButton>)}</IconGrid>
        <IconGrid $cols={11} $dark>{row3.map((n) => <IconButton key={n} aria-label={n}><Glyph name={n} size={20} /></IconButton>)}</IconGrid>

        <PanelHeader title="DISPLAY" />
        <DisplayBody>
          <DisplayGroup>
            <DisplayIcons>
              <IconButton $lit="pale" $w={21} $h={20} aria-label="Grid"><Glyph name="gridLit" size={18} /></IconButton>
              <IconButton $lit="pale" $w={21} $h={20} aria-label="Gumball"><Glyph name="gumball" size={16} /></IconButton>
              <IconButton $lit="blue" $w={21} $h={20} aria-label="Shaded"><Glyph name="ballBlue" size={18} /></IconButton>
              <IconButton aria-label="Rendered"><Glyph name="ballPink" size={17} /></IconButton>
              <IconButton aria-label="Refresh"><Glyph name="clock" size={19} /></IconButton>
              <IconButton aria-label="Mesh"><Glyph name="greenBox" size={19} /></IconButton>
            </DisplayIcons>
            <SelectBox><select aria-label="Mesh quality"><option>Coarse Mesh</option></select><Chevron /></SelectBox>
          </DisplayGroup>
          <DisplayGroup>
            <DisplayIcons>
              {["yellow1", "wire", "yellow2", "yellow3"].map((n) => <IconButton key={n} $w={21} aria-label={n}><Glyph name={n} size={19} /></IconButton>)}
              <IconButton $lit="blue" $w={20} $h={20} aria-label="Metal"><Glyph name="pearlBlue" size={18} /></IconButton>
            </DisplayIcons>
            <SelectBox><select aria-label="Material"><option>Machine</option></select><Chevron /></SelectBox>
          </DisplayGroup>
          <BlueToggle aria-label="Display on" />
        </DisplayBody>

        <PanelHeader title="SNAPS" />
        <SnapRow>
          {["end", "near", "cross", "point", "perp", "quadSnap", "center", "mid", "endLine"].map((n) => (
            <SnapButton key={n} $on={n === "mid" || n === "endLine"} aria-label={n}><Glyph name={n} size={18} /></SnapButton>
          ))}
          <BlueToggle $box aria-label="Snaps on" />
        </SnapRow>
        <SnapRow $alt>
          {["gridBox", "box3d", "line", "angle", "planar", "smart"].map((n) => (
            <SnapButton key={n} $apart={n === "angle"} aria-label={n}><Glyph name={n} size={18} /></SnapButton>
          ))}
          <Values>
            {["0.1", "0.25", "0.5", "1.0"].map((v) => <Value key={v} $on={v === "0.5"}>{v}</Value>)}
          </Values>
          <SnapButton aria-label="Grid snap"><Glyph name="gridSnap" size={18} /></SnapButton>
        </SnapRow>

        <PanelHeader title="INFO & SETTINGS" />
        <InfoRow $h={27}>
          {["gears", "wrench", "stack", "cubeDoc", "scroll", "note", "purple"].map((n) => <IconButton key={n} aria-label={n}><Glyph name={n} size={20} /></IconButton>)}
          <span />
          <IconButton $lit="blue" aria-label="Clean"><Glyph name="jug" size={18} /></IconButton>
          <IconButton $lit="pale" aria-label="Play history"><Glyph name="recPlay" size={19} /></IconButton>
          <IconButton $lit="pale" aria-label="Record history"><Glyph name="recDot" size={19} /></IconButton>
          <IconButton aria-label="Stop history"><Glyph name="recStop" size={18} /></IconButton>
        </InfoRow>
        <InfoRow $h={26}>
          {["windows", "screen", "wireCube", "book", "filter", "check", "form"].map((n) => <IconButton key={n} aria-label={n}><Glyph name={n} size={19} /></IconButton>)}
          <span />
          <IconButton $lit="grey" aria-label="Prongs"><Glyph name="crownRed" size={18} /></IconButton>
          <IconButton aria-label="Select prongs"><Glyph name="crownMix" size={20} /></IconButton>
          <IconButton aria-label="Edit prongs"><Glyph name="crownGreen" size={20} /></IconButton>
          <IconButton $lit="blue" aria-label="Ghost prongs"><Glyph name="crownBlue" size={19} /></IconButton>
        </InfoRow>

        <PanelHeader title="LAYERS" />
        <Layers>
          <LightsRow>
            <LayerItem name="Lights" color="#fdfdfd" />
            <VisibilityButton>Hide
              <svg width="15" height="8" viewBox="0 0 15 8" aria-hidden="true"><ellipse cx="7.500" cy="4" rx="6.500" ry="3.500" fill="#8e8f91" stroke="#bbb" /></svg>
            </VisibilityButton>
            <VisibilityButton>Show
              <svg width="15" height="8" viewBox="0 0 15 8" aria-hidden="true"><path d="M1 4q6.500-6 13 0-6.500 6-13 0z" fill="#222" stroke="#f2f2f2" strokeWidth="1.500" /><circle cx="7.500" cy="4" r="2" fill="#fff" /></svg>
            </VisibilityButton>
          </LightsRow>
          <LayerBlock sets={groups} />
          <Spacer>
            <button aria-label="Collapse user layers">
              <svg width="11" height="11" viewBox="0 0 11 11"><circle cx="5.500" cy="5.500" r="5" fill="#3a3a3a" stroke="#9a9a9a" /><path d="M2.500 6.500l3-3 3 3z" fill="#eee" /></svg>
            </button>
          </Spacer>
          <LayerBlock sets={userGroups} />
        </Layers>

        <svg width="0" height="0" aria-hidden="true">
          <defs>
            <radialGradient id="pearl" cx=".38" cy=".32"><stop offset="0" stopColor="#fff" /><stop offset=".6" stopColor="#dedcda" /><stop offset="1" stopColor="#9c9896" /></radialGradient>
            <radialGradient id="steel" cx=".38" cy=".3"><stop offset="0" stopColor="#dbe7f5" /><stop offset=".4" stopColor="#6684a8" /><stop offset="1" stopColor="#22364e" /></radialGradient>
          </defs>
        </svg>
      </Sidebar>

      <Divider />

      <Workspace>
        <CommandArea>
          <History>
            <p>10 polysurfaces added to selection.</p>
            <p>No objects added to selection.</p>
            <p>12 polysurfaces added to selection.</p>
          </History>
          <CommandLine>Command:<input type="text" /></CommandLine>
        </CommandArea>
        <Band $ruled>
          <TabStrip tabs={toolTabs} active="CPlanes" />
          <Tools sets={cplaneTools} height={30} />
        </Band>
        <Band>
          <TabStrip tabs={["SubD", "Emboss", "Sculpt"]} active="Sculpt" />
          <Tools sets={sculptTools} height={29} />
        </Band>
        <TabRow $big>
          {["Perspective", "Through Finger", "Side View", "Looking Down"].map((t) => <Tab key={t} $big $on={t === "Through Finger"}>{t}</Tab>)}
          <Tab $big aria-label="New viewport">
            <svg width="11" height="11" viewBox="0 0 11 11"><path d="M4.500 1.500h2v3h3v2h-3v3h-2v-3h-3v-2h3z" fill="none" stroke="#4c5b57" /></svg>
          </Tab>
        </TabRow>
        <Viewport>
          <Model />
          <ViewLabel>
            <span>Through Finger</span>
            <button aria-label="Viewport menu"><svg width="7" height="4" viewBox="0 0 7 4"><path d="M0 0h7L3.500 4z" fill="#14281c" /></svg></button>
          </ViewLabel>
        </Viewport>
      </Workspace>
    </Shell>
  );
}
